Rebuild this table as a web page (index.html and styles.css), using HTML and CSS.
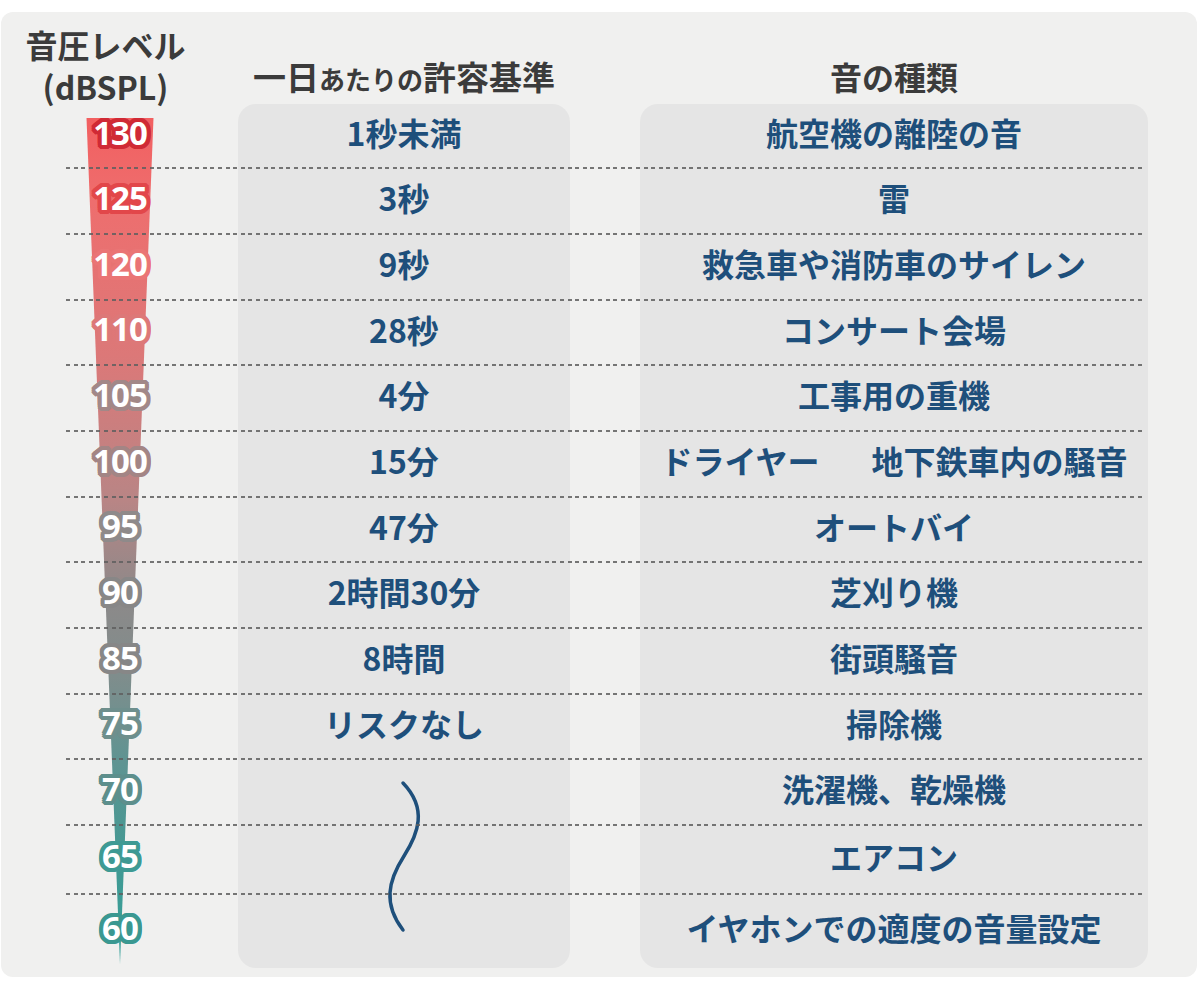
FILE: index.html
```html
<!DOCTYPE html>
<html lang="ja">
<head>
<meta charset="utf-8">
<title>音圧レベルと許容基準</title>
<link rel="stylesheet" href="styles.css">
</head>
<body>
<div class="card">
  <div class="head">
    <div class="h-level">音圧レベル<br>(dBSPL)</div>
    <div class="h-limit">一日<span class="kana">あたりの</span>許容基準</div>
    <div class="h-kind">音の種類</div>
  </div>
  <div class="body">
    <div class="backdrop">
      <svg class="gauge" viewBox="0 0 108 864" width="108" height="864" aria-hidden="true">
        <defs>
          <linearGradient id="g" x1="0" y1="0" x2="0" y2="1">
            <stop offset="0" stop-color="#f25f60"/>
            <stop offset="0.1" stop-color="#ee6e6e"/>
            <stop offset="0.28" stop-color="#dc7878"/>
            <stop offset="0.45" stop-color="#b98585"/>
            <stop offset="0.56" stop-color="#8e8989"/>
            <stop offset="0.66" stop-color="#7f8d8c"/>
            <stop offset="0.76" stop-color="#5f9492"/>
            <stop offset="0.88" stop-color="#419993"/>
            <stop offset="1" stop-color="#35a19a"/>
          </linearGradient>
        </defs>
        <polygon points="20.5,14 87.5,14 54,860" fill="url(#g)"/>
      </svg>
      <div class="panel panel-limit">
        <svg class="wave" viewBox="0 0 332 209" width="332" height="209" aria-hidden="true">
          <path d="M165 24 C 190 50, 180 75, 166 97 C 150 122, 145 145, 165 171" fill="none" stroke="#1e4f7b" stroke-width="3.5" stroke-linecap="round"/>
        </svg>
      </div>
      <div class="panel panel-kind"></div>
    </div>
    <div class="rows">
      <div class="row"><span class="lv c130">130</span><span class="limit">1秒未満</span><span class="kind">航空機の離陸の音</span></div>
      <div class="row"><span class="lv c125">125</span><span class="limit">3秒</span><span class="kind">雷</span></div>
      <div class="row"><span class="lv c120">120</span><span class="limit">9秒</span><span class="kind">救急車や消防車のサイレン</span></div>
      <div class="row"><span class="lv c110">110</span><span class="limit">28秒</span><span class="kind">コンサート会場</span></div>
      <div class="row"><span class="lv c105">105</span><span class="limit">4分</span><span class="kind">工事用の重機</span></div>
      <div class="row"><span class="lv c100">100</span><span class="limit">15分</span><span class="kind">ドライヤー<span class="gap">地下鉄車内の騒音</span></span></div>
      <div class="row"><span class="lv c95">95</span><span class="limit">47分</span><span class="kind">オートバイ</span></div>
      <div class="row"><span class="lv c90">90</span><span class="limit">2時間30分</span><span class="kind">芝刈り機</span></div>
      <div class="row"><span class="lv c85">85</span><span class="limit">8時間</span><span class="kind">街頭騒音</span></div>
      <div class="row"><span class="lv c75">75</span><span class="limit">リスクなし</span><span class="kind">掃除機</span></div>
      <div class="row"><span class="lv c70">70</span><span class="kind">洗濯機、乾燥機</span></div>
      <div class="row"><span class="lv c65">65</span><span class="kind">エアコン</span></div>
      <div class="row"><span class="lv c60">60</span><span class="kind">イヤホンでの適度の音量設定</span></div>
    </div>
  </div>
</div>
</body>
</html>
```

FILE: styles.css
```css
* { box-sizing: border-box; }

body {
  margin: 0;
  background: #ffffff;
  font-family: "Noto Sans CJK JP", "Noto Sans", sans-serif;
}

.card {
  width: 1196px;
  height: 965px;
  margin: 12px 0 0 1px;
  background: #f0f0ef;
  border-radius: 12px;
  display: flex;
  flex-direction: column;
}

.head,
.backdrop,
.row {
  display: grid;
  grid-template-columns: 65px 108px 64px 332px 70px 508px 49px;
}

.head {
  height: 92px;
  flex: none;
  color: #3b3b3b;
  font-weight: 700;
  font-size: 32px;
  line-height: 42px;
}

.h-level {
  grid-column: 1 / 4;
  padding: 11px 28px 0 0;
  text-align: center;
}

.h-limit {
  grid-column: 4;
  padding-top: 43px;
  text-align: center;
  white-space: nowrap;
  font-size: 33px;
}

.kana { font-size: 26px; }

.h-kind {
  grid-column: 6;
  padding-top: 43px;
  text-align: center;
}

.body {
  display: grid;
  height: 864px;
  flex: none;
}

.backdrop,
.rows {
  grid-area: 1 / 1;
}

.backdrop { grid-template-rows: 864px; }

.gauge {
  grid-column: 2;
  display: block;
}

.panel {
  background: #e5e5e5;
  border-radius: 18px;
}

.panel-limit {
  grid-column: 4;
  display: flex;
  flex-direction: column;
  justify-content: flex-end;
}

.wave { display: block; }

.panel-kind { grid-column: 6; }

.rows {
  display: flex;
  flex-direction: column;
}

.row {
  height: 66px;
  align-items: center;
}

.row:first-child { height: 64px; }
.row:nth-child(4),
.row:nth-child(7),
.row:nth-child(10) { height: 65px; }
.row:nth-child(12) { height: 69px; }
.row:last-child { height: 74px; }

.row > * { grid-row: 1; }

.row::before {
  content: "";
  grid-row: 1;
  grid-column: 2 / 7;
  align-self: end;
  height: 2px;
  margin: 0 6px -1px 0;
  background: repeating-linear-gradient(90deg, #5f5f5f 0 4px, transparent 4px 7.6px);
  opacity: 0.85;
}

.row:last-child::before { display: none; }

.lv {
  --c: #888888;
  grid-column: 2;
  justify-self: center;
  font-family: "Noto Sans", "Noto Sans CJK JP", sans-serif;
  font-size: 33px;
  font-weight: 700;
  line-height: 1;
  color: #ffffff;
  letter-spacing: -1px;
  padding-bottom: 8px;
  text-shadow:
    4px 0 0 var(--c), -4px 0 0 var(--c), 0 4px 0 var(--c), 0 -4px 0 var(--c),
    3px 3px 0 var(--c), -3px 3px 0 var(--c), 3px -3px 0 var(--c), -3px -3px 0 var(--c),
    4px 2px 0 var(--c), 4px -2px 0 var(--c), -4px 2px 0 var(--c), -4px -2px 0 var(--c),
    2px 4px 0 var(--c), -2px 4px 0 var(--c), 2px -4px 0 var(--c), -2px -4px 0 var(--c),
    2px 0 0 var(--c), -2px 0 0 var(--c), 0 2px 0 var(--c), 0 -2px 0 var(--c);
}

.c130 { --c: #d02a35; }
.c125 { --c: #e2474a; }
.c120 { --c: #ea7575; }
.c110 { --c: #dd7878; }
.c105 { --c: #a28888; }
.c100 { --c: #a38585; }
.c95  { --c: #8f8a8a; }
.c90  { --c: #888787; }
.c85  { --c: #878787; }
.c75  { --c: #6e8f8d; }
.c70  { --c: #5d8f8c; }
.c65  { --c: #3e9a94; }
.c60  { --c: #3a9891; }

.limit,
.kind {
  justify-self: center;
  text-align: center;
  white-space: nowrap;
  font-size: 32px;
  font-weight: 700;
  line-height: 1;
  color: #1e4f7b;
  padding-bottom: 8px;
}

.limit { grid-column: 4; }
.kind { grid-column: 6; }

.gap { margin-left: 52px; }
```
